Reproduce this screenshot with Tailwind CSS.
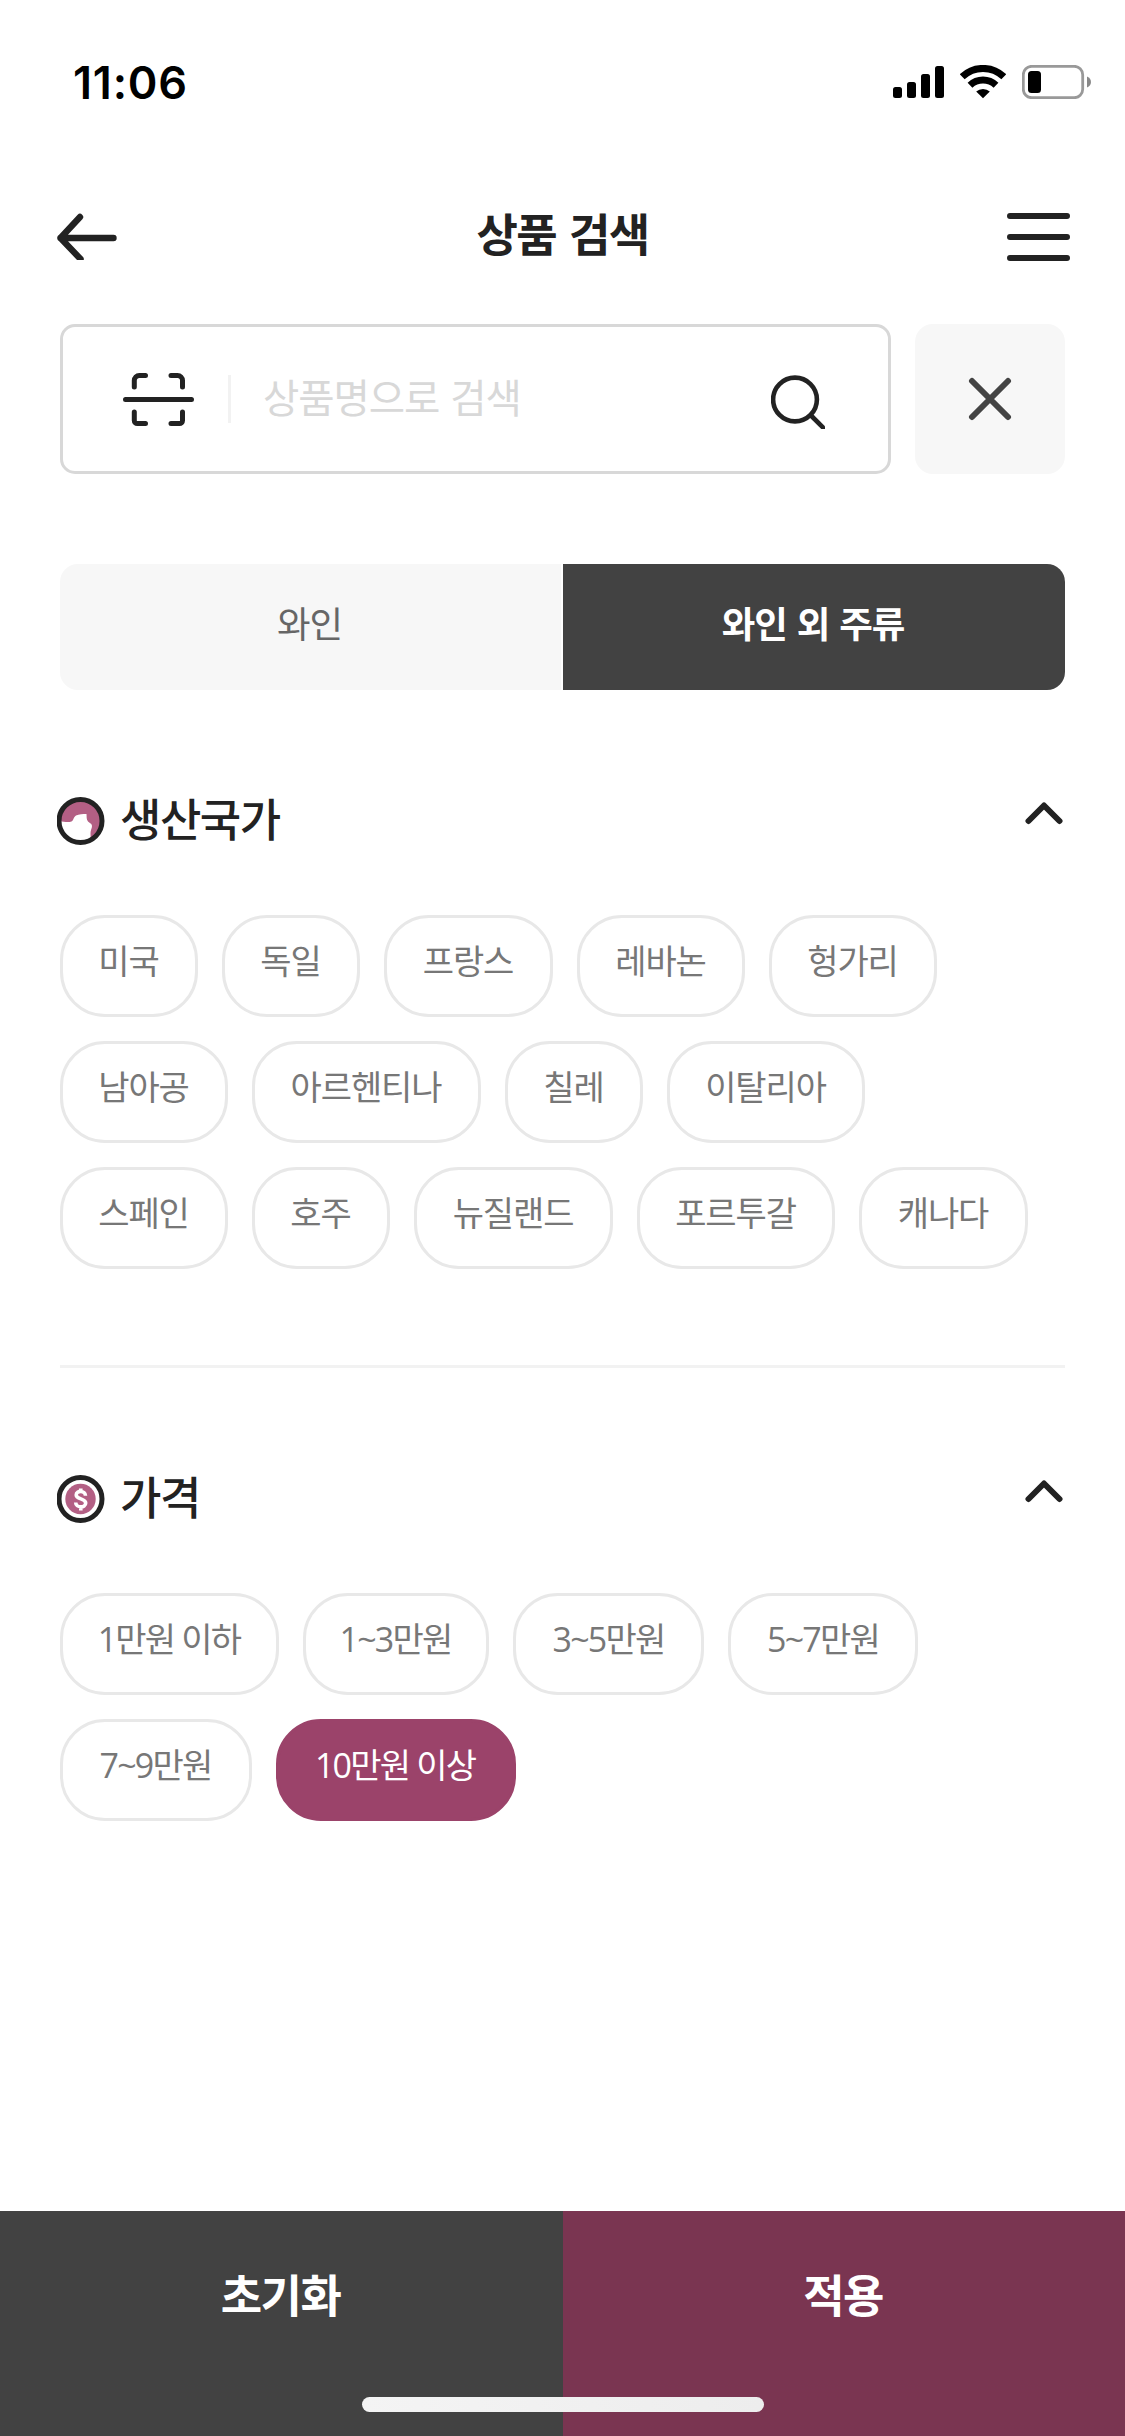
<!DOCTYPE html>
<html lang="ko">
<head>
<meta charset="utf-8">
<title>상품 검색</title>
<script src="https://cdn.jsdelivr.net/npm/@tailwindcss/browser@4"></script>
</head>
<body class="bg-white">
<div class="relative flex h-[2436px] w-[1125px] flex-col overflow-hidden bg-white font-['Noto_Sans_CJK_KR',sans-serif] text-[#222]">

  <!-- status bar -->
  <div class="flex h-[132px] items-start justify-between pt-[60px] pr-[33px] pl-[73px] text-black">
    <span class="font-['Inter',sans-serif] text-[45px] leading-[45px] font-semibold tracking-[0.8px]">11:06</span>
    <div class="flex items-start pt-[5px]">
      <svg class="mr-4" width="52" height="34" viewBox="0 0 52 34"><rect x="1" y="22" width="9" height="11" rx="2.5"/><rect x="15" y="17" width="9" height="16" rx="2.5"/><rect x="29" y="9" width="9" height="24" rx="2.5"/><rect x="43" y="1" width="9" height="32" rx="2.5"/></svg>
      <svg class="mr-4" width="46" height="34" viewBox="0 0 46 34" fill="none" stroke="#000"><path d="M2.2 11.8a30 30 0 0 1 41.6 0" stroke-width="7"/><path d="M10 20.2a19 19 0 0 1 26 0" stroke-width="7"/><path d="M16.2 26.6a10 10 0 0 1 13.6 0L23 33.2z" fill="#000" stroke="none"/></svg>
      <svg width="70" height="34" viewBox="0 0 70 34"><rect x="1.3" y="1.3" width="59.4" height="31.4" rx="8.5" fill="none" stroke="#999" stroke-width="2.8"/><rect x="6" y="6" width="13" height="22" rx="3.5"/><path d="M65 11.5c5.300 1.800 5.300 9.200 0 11z" fill="#888"/></svg>
    </div>
  </div>

  <!-- header -->
  <header class="flex h-[192px] items-start justify-between pr-[54px] pl-[56px]">
    <svg class="mt-[81px]" width="62" height="47" viewBox="0 0 62 47" fill="none" stroke="#222" stroke-width="6.400" stroke-linecap="round" stroke-linejoin="round"><path d="M57.500 25H4.500M24 4 4.500 25l20 21"/></svg>
    <h1 class="mt-[65px] text-[45px] leading-[71px] font-bold tracking-[-1.6px] [word-spacing:2px]">상품 검색</h1>
    <svg class="mt-[81px]" width="64" height="48" viewBox="1 0 64 48" stroke="#222" stroke-width="6" stroke-linecap="round"><path d="M4 3h57M4 24h57M4 45h57"/></svg>
  </header>

  <!-- search -->
  <div class="flex gap-6 pr-[60px] pl-[60px]">
    <div class="flex h-[150px] w-[831px] items-center rounded-[15px] border-3 border-[#d8d8d8] pl-[60px]">
      <svg width="71" height="54" viewBox="0 0 71 54" fill="none" stroke="#222" stroke-width="5" stroke-linecap="round"><path d="M2.500 27.500h66M11.300 15V8.500a5 5 0 0 1 5-5H22.500M48 3.500h6.500a5 5 0 0 1 5 5V15M11.300 40v8.500a3 3 0 0 0 3 3H22.500M48 51.500h8.500a3 3 0 0 0 3-3V40"/></svg>
      <div class="ml-[34px] h-12 w-[3px] bg-[#f2f2f2]"></div>
      <span class="ml-8 pb-[6px] text-[39.500px] leading-[62px] tracking-[-1.1px] text-[#d8d8d8] [word-spacing:1px]">상품명으로 검색</span>
      <svg class="mt-[6px] ml-auto mr-[63px]" width="54" height="54" viewBox="0 0 54 54" fill="none" stroke="#222" stroke-width="4.600"><circle cx="24" cy="24.500" r="21.900"/><path d="M40 40.500 54 54.500"/></svg>
    </div>
    <button class="flex size-[150px] items-center justify-center rounded-[18px] bg-[#f7f7f7]">
      <svg width="44" height="44" viewBox="0 0 44 44" stroke="#444" stroke-width="6" stroke-linecap="round"><path d="m4 4 36 36M40 4 4 40"/></svg>
    </button>
  </div>

  <!-- category tabs -->
  <div class="mt-[90px] flex h-[126px] gap-[2px] px-[60px] text-[36.500px] leading-[58px] tracking-[-1.1px]">
    <div class="flex w-[501px] items-center justify-center rounded-l-[18px] bg-[#f7f7f7] pr-[2px] pb-2 text-[#666]">와인</div>
    <div class="flex w-[502px] items-center justify-center rounded-r-[18px] bg-[#424242] pr-[2px] pb-2 font-bold text-white [word-spacing:1px]">와인 외 주류</div>
  </div>

  <!-- country of origin -->
  <section class="mt-[93px] px-[57px]">
    <div class="flex h-[71px] items-start justify-between">
      <div class="flex items-start">
        <svg class="mt-[14px] mr-[15px]" width="48" height="48" viewBox="0.500 0 48 48"><circle cx="24" cy="24" r="21.500" fill="#b35f84"/><path d="M3 24c5 1 9 1.500 12 .500 2-.800 2-4.500 4.500-6 3-1.200 7-1.500 10.500-1.500.300 2.500-.300 5.500 1.500 7.500 1.500 1.500 4 2 4 4.500 0 2.500-1.500 4-1.500 7 0 3 .500 4-1 7.500A21.500 21.500 0 0 1 3 24z" fill="#fff"/><circle cx="24" cy="24" r="21.500" fill="none" stroke="#222" stroke-width="5"/></svg>
        <h2 class="-mt-px text-[45px] leading-[71px] font-medium tracking-[-1.5px]">생산국가</h2>
      </div>
      <svg class="mt-[18px] mr-[5px]" width="38" height="24" viewBox="0 0 38 24" fill="none" stroke="#222" stroke-width="6" stroke-linecap="round" stroke-linejoin="round"><path d="M3.500 20 19 4.500 34.500 20"/></svg>
    </div>
    <div class="mt-[61px] ml-[3px] flex flex-col gap-6 text-[34px] leading-[53px] tracking-[-1.1px] text-[#777]">
      <div class="flex gap-6">
        <span class="flex h-[102px] w-[138px] justify-center rounded-[45px] border-3 border-[#e8e8e8] pt-[15px] pr-px">미국</span>
        <span class="flex h-[102px] w-[138px] justify-center rounded-[45px] border-3 border-[#e8e8e8] pt-[15px] pr-px">독일</span>
        <span class="flex h-[102px] w-[169px] justify-center rounded-[45px] border-3 border-[#e8e8e8] pt-[15px] pr-px">프랑스</span>
        <span class="flex h-[102px] w-[168px] justify-center rounded-[45px] border-3 border-[#e8e8e8] pt-[15px] pr-px">레바논</span>
        <span class="flex h-[102px] w-[168px] justify-center rounded-[45px] border-3 border-[#e8e8e8] pt-[15px] pr-px">헝가리</span>
      </div>
      <div class="flex gap-6">
        <span class="flex h-[102px] w-[168px] justify-center rounded-[45px] border-3 border-[#e8e8e8] pt-[15px] pr-px">남아공</span>
        <span class="flex h-[102px] w-[229px] justify-center rounded-[45px] border-3 border-[#e8e8e8] pt-[15px] pr-px">아르헨티나</span>
        <span class="flex h-[102px] w-[138px] justify-center rounded-[45px] border-3 border-[#e8e8e8] pt-[15px] pr-px">칠레</span>
        <span class="flex h-[102px] w-[198px] justify-center rounded-[45px] border-3 border-[#e8e8e8] pt-[15px] pr-px">이탈리아</span>
      </div>
      <div class="flex gap-6">
        <span class="flex h-[102px] w-[168px] justify-center rounded-[45px] border-3 border-[#e8e8e8] pt-[15px] pr-px">스페인</span>
        <span class="flex h-[102px] w-[138px] justify-center rounded-[45px] border-3 border-[#e8e8e8] pt-[15px] pr-px">호주</span>
        <span class="flex h-[102px] w-[199px] justify-center rounded-[45px] border-3 border-[#e8e8e8] pt-[15px] pr-px">뉴질랜드</span>
        <span class="flex h-[102px] w-[198px] justify-center rounded-[45px] border-3 border-[#e8e8e8] pt-[15px] pr-px">포르투갈</span>
        <span class="flex h-[102px] w-[169px] justify-center rounded-[45px] border-3 border-[#e8e8e8] pt-[15px] pr-px">캐나다</span>
      </div>
    </div>
    <div class="mx-[3px] mt-24 h-[3px] bg-[#f2f2f2]"></div>
  </section>

  <!-- price -->
  <section class="mt-[93px] px-[57px]">
    <div class="flex h-[71px] items-start justify-between">
      <div class="flex items-start">
        <svg class="mt-[14px] mr-[15px]" width="48" height="48" viewBox="0.500 0 48 48"><circle cx="24" cy="24" r="21.500" fill="#fff" stroke="#222" stroke-width="5"/><circle cx="24" cy="24" r="15.200" fill="#b35f84"/><path d="M29 20.800c0-5.800-9.300-5.600-9.300-.800 0 4.500 9.500 3.300 9.500 8 0 5.200-10 5.200-10-.6M24.300 13.500v3.500M24.300 31.500v4" fill="none" stroke="#fff" stroke-width="3.600"/></svg>
        <h2 class="-mt-px text-[45px] leading-[71px] font-medium tracking-[-1.5px]">가격</h2>
      </div>
      <svg class="mt-[18px] mr-[5px]" width="38" height="24" viewBox="0 0 38 24" fill="none" stroke="#222" stroke-width="6" stroke-linecap="round" stroke-linejoin="round"><path d="M3.500 20 19 4.500 34.500 20"/></svg>
    </div>
    <div class="mt-[61px] ml-[3px] flex flex-col gap-6 font-['Open_Sans','Noto_Sans_CJK_KR',sans-serif] text-[34px] leading-[53px] tracking-[-1.8px] text-[#777]">
      <div class="flex gap-6">
        <span class="flex h-[102px] w-[219px] justify-center rounded-[45px] border-3 border-[#e8e8e8] pt-[17px] pr-px">1만원 이하</span>
        <span class="flex h-[102px] w-[186px] justify-center rounded-[45px] border-3 border-[#e8e8e8] pt-[17px] pr-px">1~3만원</span>
        <span class="flex h-[102px] w-[191px] justify-center rounded-[45px] border-3 border-[#e8e8e8] pt-[17px]">3~5만원</span>
        <span class="flex h-[102px] w-[190px] justify-center rounded-[45px] border-3 border-[#e8e8e8] pt-[17px]">5~7만원</span>
      </div>
      <div class="flex gap-6">
        <span class="flex h-[102px] w-[192px] justify-center rounded-[45px] border-3 border-[#e8e8e8] pt-[17px] pr-px">7~9만원</span>
        <span class="flex h-[102px] w-[240px] justify-center rounded-[45px] border-3 border-[#9b436a] bg-[#9b436a] pt-[17px] pr-[2px] text-white">10만원 이상</span>
      </div>
    </div>
  </section>

  <!-- bottom actions -->
  <footer class="mt-auto flex h-[225px] text-[45px] leading-[71px] font-bold tracking-[-1.6px] text-white">
    <button class="flex w-[563px] items-start justify-center bg-[#424242] pt-[47px] pr-[2px]">초기화</button>
    <button class="flex w-[562px] items-start justify-center bg-[#7a3551] pt-[47px] pr-[2px]">적용</button>
  </footer>
  <div class="absolute bottom-6 left-[362px] h-[15px] w-[402px] rounded-full bg-linear-to-r from-[#f4f4f4] to-[#ededed]"></div>
</div>
</body>
</html>
